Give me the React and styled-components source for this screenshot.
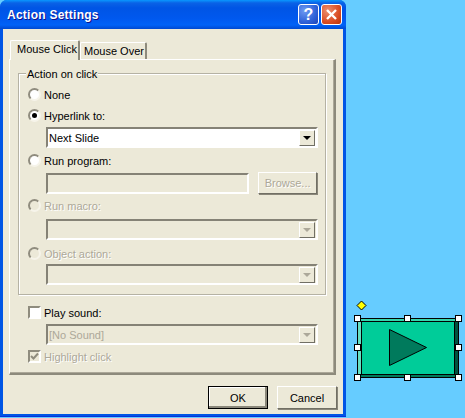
import React from 'react';
import styled, { createGlobalStyle } from 'styled-components';

const GlobalStyle = createGlobalStyle`
  html, body {
    margin: 0;
    padding: 0;
    background: #66ccff;
  }
  * {
    box-sizing: border-box;
  }
`;

const Page = styled.div`
  display: flex;
  width: 465px;
  height: 418px;
  overflow: hidden;
  background: #66ccff;
  font-family: "Liberation Sans", Arial, sans-serif;
  font-size: 11px;
  color: #000;
`;

const Dialog = styled.div`
  width: 346px;
  height: 417px;
  display: flex;
  flex-direction: column;
  border-radius: 7px 7px 0 0;
  background: #0055e5;
  border-bottom: 1px solid #0831d9;
`;

const TitleBar = styled.div`
  height: 29px;
  flex: none;
  display: flex;
  align-items: center;
  padding: 0 4px 0 7px;
  border-radius: 7px 7px 0 0;
  background: linear-gradient(180deg, #0997ff 0, #0a62e6 3px, #0055e5 8px, #0058ee 18px, #0062f7 25px, #0049d0 29px);
`;

const TitleText = styled.div`
  flex: 1;
  font-size: 12px;
  font-weight: 700;
  color: #fff;
  letter-spacing: 0.25px;
  text-shadow: 1px 1px 0 #0f1089;
`;

const TitleButton = styled.div`
  width: 21px;
  height: 21px;
  margin-left: 2px;
  display: flex;
  align-items: center;
  justify-content: center;
  border: 1px solid #fff;
  border-radius: 3px;
  color: #fff;
  font-size: 16px;
  font-weight: 700;
  background: ${(p) =>
    p.$close
      ? 'radial-gradient(circle at 30% 30%, #ec8f70, #da4d24 60%, #b93208)'
      : 'radial-gradient(circle at 30% 30%, #6f9bf2, #2f62d8 60%, #1c43b8)'};
`;

const Body = styled.div`
  flex: 1;
  margin: 0 3px 2px;
  padding: 11px 7px 0 6px;
  background: #ece9d8;
  display: flex;
  flex-direction: column;
`;

const TabRow = styled.div`
  height: 19px;
  flex: none;
  display: flex;
  align-items: flex-end;
  padding-left: 1px;
  position: relative;
  z-index: 1;
`;

const Tab = styled.div`
  height: ${(p) => (p.$active ? '20px' : '17px')};
  width: ${(p) => (p.$active ? '70px' : '67px')};
  margin-bottom: ${(p) => (p.$active ? '-1px' : '0')};
  padding: ${(p) => (p.$active ? '2px 0 0 6px' : '2px 0 0 3px')};
  background: #ece9d8;
  border: 1px solid #fff;
  border-bottom: none;
  border-right: 2px solid #8d8a7c;
  border-radius: 2px 2px 0 0;
  white-space: nowrap;
`;

const Panel = styled.div`
  height: 316px;
  flex: none;
  padding: 13px 8px 0;
  border: 1px solid #fff;
  border-right: 2px solid #8d8a7c;
  border-bottom: 2px solid #8d8a7c;
  box-shadow: inset -1px -1px 0 #aca899;
`;

const GroupBox = styled.div`
  position: relative;
  height: 222px;
  padding: 14px 8px 0 9px;
  border: 1px solid #b5b2a4;
  box-shadow: 1px 1px 0 #fff, inset 1px 1px 0 #fff;
`;

const Legend = styled.div`
  position: absolute;
  top: -7px;
  left: 7px;
  padding: 0 1px;
  background: #ece9d8;
  line-height: 14px;
`;

const OptionRow = styled.label`
  display: flex;
  align-items: center;
  height: 13px;
  margin-top: ${(p) => p.$top || 0}px;
  color: ${(p) => (p.$disabled ? '#aca899' : '#000')};
  text-shadow: ${(p) => (p.$disabled ? '1px 1px 0 #fff' : 'none')};
`;

const Radio = styled.span`
  width: 13px;
  height: 13px;
  flex: none;
  margin-right: 3px;
  border-radius: 50%;
  display: flex;
  align-items: center;
  justify-content: center;
  border: 2px solid;
  border-color: #8f8c7e #f6f4ea #f6f4ea #8f8c7e;
  background: ${(p) => (p.$disabled ? '#ece9d8' : '#fff')};

  &::after {
    content: '';
    display: ${(p) => (p.$checked ? 'block' : 'none')};
    width: 5px;
    height: 5px;
    border-radius: 50%;
    background: #000;
  }
`;

const CheckBox = styled.span`
  width: 13px;
  height: 13px;
  flex: none;
  margin-right: 3px;
  display: flex;
  border: 2px solid;
  border-color: #8f8c7e #fff #fff #8f8c7e;
  background: ${(p) => (p.$disabled ? '#ece9d8' : '#fff')};
`;

const Sunken = styled.div`
  display: flex;
  align-items: center;
  height: ${(p) => p.$height || 21}px;
  width: ${(p) => p.$width || 272}px;
  margin-top: ${(p) => p.$top || 0}px;
  margin-left: 18px;
  padding: 0 1px 0 1px;
  border: 2px solid;
  border-color: #858276 #fff #fff #858276;
  background: ${(p) => (p.$disabled ? '#ece9d8' : '#fff')};
  color: ${(p) => (p.$disabled ? '#aca899' : '#000')};
`;

const SelectText = styled.span`
  flex: 1;
  white-space: nowrap;
`;

const Arrow = styled.span`
  width: 16px;
  height: 16px;
  flex: none;
  display: flex;
  align-items: center;
  justify-content: center;
  background: #ece9d8;
  border: 1px solid;
  border-color: #fff #716f64 #716f64 #fff;

  &::after {
    content: '';
    border-style: solid;
    border-width: 4px 4px 0;
    border-color: ${(p) => (p.$disabled ? '#aca899' : '#000')} transparent transparent;
  }
`;

const ProgramRow = styled.div`
  display: flex;
  align-items: center;
  margin-top: 5px;
`;

const BrowseButton = styled.div`
  width: 59px;
  height: 22px;
  margin-left: 9px;
  display: flex;
  align-items: center;
  justify-content: center;
  color: #aca899;
  text-shadow: 1px 1px 0 #fff;
  border: 1px solid;
  border-color: #fff #716f64 #716f64 #fff;
  box-shadow: 1px 1px 0 #8a877a;
`;

const SoundBlock = styled.div`
  padding-left: 10px;
`;

const Footer = styled.div`
  display: flex;
  justify-content: flex-end;
  gap: 9px;
  margin: 11px -1px 0 0;
`;

const Button = styled.div`
  width: 60px;
  height: 23px;
  display: flex;
  align-items: center;
  justify-content: center;
  border: 1px solid;
  border-color: ${(p) => (p.$default ? '#000' : '#fff #716f64 #716f64 #fff')};
  box-shadow: ${(p) => (p.$default ? 'inset -2px -2px 0 #8a877a, inset 1px 1px 0 #fff' : '1px 1px 0 #8a877a')};
`;

const Canvas = styled.div`
  flex: 1;
  position: relative;
`;

const ShapeLayer = styled.svg`
  position: absolute;
  left: 4px;
  top: 298px;
  display: block;
`;

const handles = [
  [357, 318], [407, 318], [458, 318],
  [357, 347], [458, 347],
  [357, 377], [407, 377], [458, 377],
];

const DropDown = ({ top, disabled, children }) => (
  <Sunken $top={top} $disabled={disabled}>
    <SelectText>{children}</SelectText>
    <Arrow $disabled={disabled} />
  </Sunken>
);

const App = () => (
  <Page>
    <GlobalStyle />
    <Dialog>
      <TitleBar>
        <TitleText>Action Settings</TitleText>
        <TitleButton>?</TitleButton>
        <TitleButton $close>
          <svg width="13" height="13" viewBox="0 0 13 13">
            <path d="M2 2 L11 11 M11 2 L2 11" stroke="#fff" strokeWidth="2.4" />
          </svg>
        </TitleButton>
      </TitleBar>
      <Body>
        <TabRow>
          <Tab $active>Mouse Click</Tab>
          <Tab>Mouse Over</Tab>
        </TabRow>
        <Panel>
          <GroupBox>
            <Legend>Action on click</Legend>
            <OptionRow><Radio />None</OptionRow>
            <OptionRow $top={8}><Radio $checked />Hyperlink to:</OptionRow>
            <DropDown top={5}>Next Slide</DropDown>
            <OptionRow $top={6}><Radio />Run program:</OptionRow>
            <ProgramRow>
              <Sunken $width={204} $disabled />
              <BrowseButton>Browse...</BrowseButton>
            </ProgramRow>
            <OptionRow $top={5} $disabled><Radio $disabled />Run macro:</OptionRow>
            <DropDown top={7} disabled />
            <OptionRow $top={7} $disabled><Radio $disabled />Object action:</OptionRow>
            <DropDown top={4} disabled />
          </GroupBox>
          <SoundBlock>
            <OptionRow $top={11}>
              <CheckBox />Play sound:
            </OptionRow>
            <DropDown top={5} disabled>[No Sound]</DropDown>
            <OptionRow $top={5} $disabled>
              <CheckBox $disabled>
                <svg width="9" height="9" viewBox="0 0 9 9">
                  <path d="M1 4 L3.5 6.5 L8 1.5" fill="none" stroke="#8f8c7e" strokeWidth="2" />
                </svg>
              </CheckBox>
              Highlight click
            </OptionRow>
          </SoundBlock>
        </Panel>
        <Footer>
          <Button $default>OK</Button>
          <Button>Cancel</Button>
        </Footer>
      </Body>
    </Dialog>
    <Canvas>
      <ShapeLayer width="115" height="90" viewBox="350 298 115 90">
        <path d="M361.5 301 L366 305.5 L361.5 310 L357 305.5 Z" fill="#ffff00" stroke="#000" />
        <rect x="357.5" y="318.5" width="101" height="59" fill="#00cc99" stroke="#000" />
        <path d="M358 319 H458 L454 322 H362 Z" fill="#33d6ad" />
        <path d="M358 319 L362 322 V374 L358 377 Z" fill="#66e0c2" />
        <path d="M458 319 L454 322 V374 L458 377 Z" fill="#005240" />
        <path d="M358 377 L362 374 H454 L458 377 Z" fill="#007a5c" />
        <rect x="361.5" y="321.5" width="93" height="53" fill="#00cc99" stroke="#000" />
        <path d="M389.5 329.5 L426.5 347.5 L389.5 365.5 Z" fill="#007a5c" stroke="#000" />
        {handles.map(([x, y]) => (
          <rect key={`${x}-${y}`} x={x - 2.5} y={y - 2.5} width="6" height="6" fill="#fff" stroke="#000" />
        ))}
      </ShapeLayer>
    </Canvas>
  </Page>
);

export default App;
